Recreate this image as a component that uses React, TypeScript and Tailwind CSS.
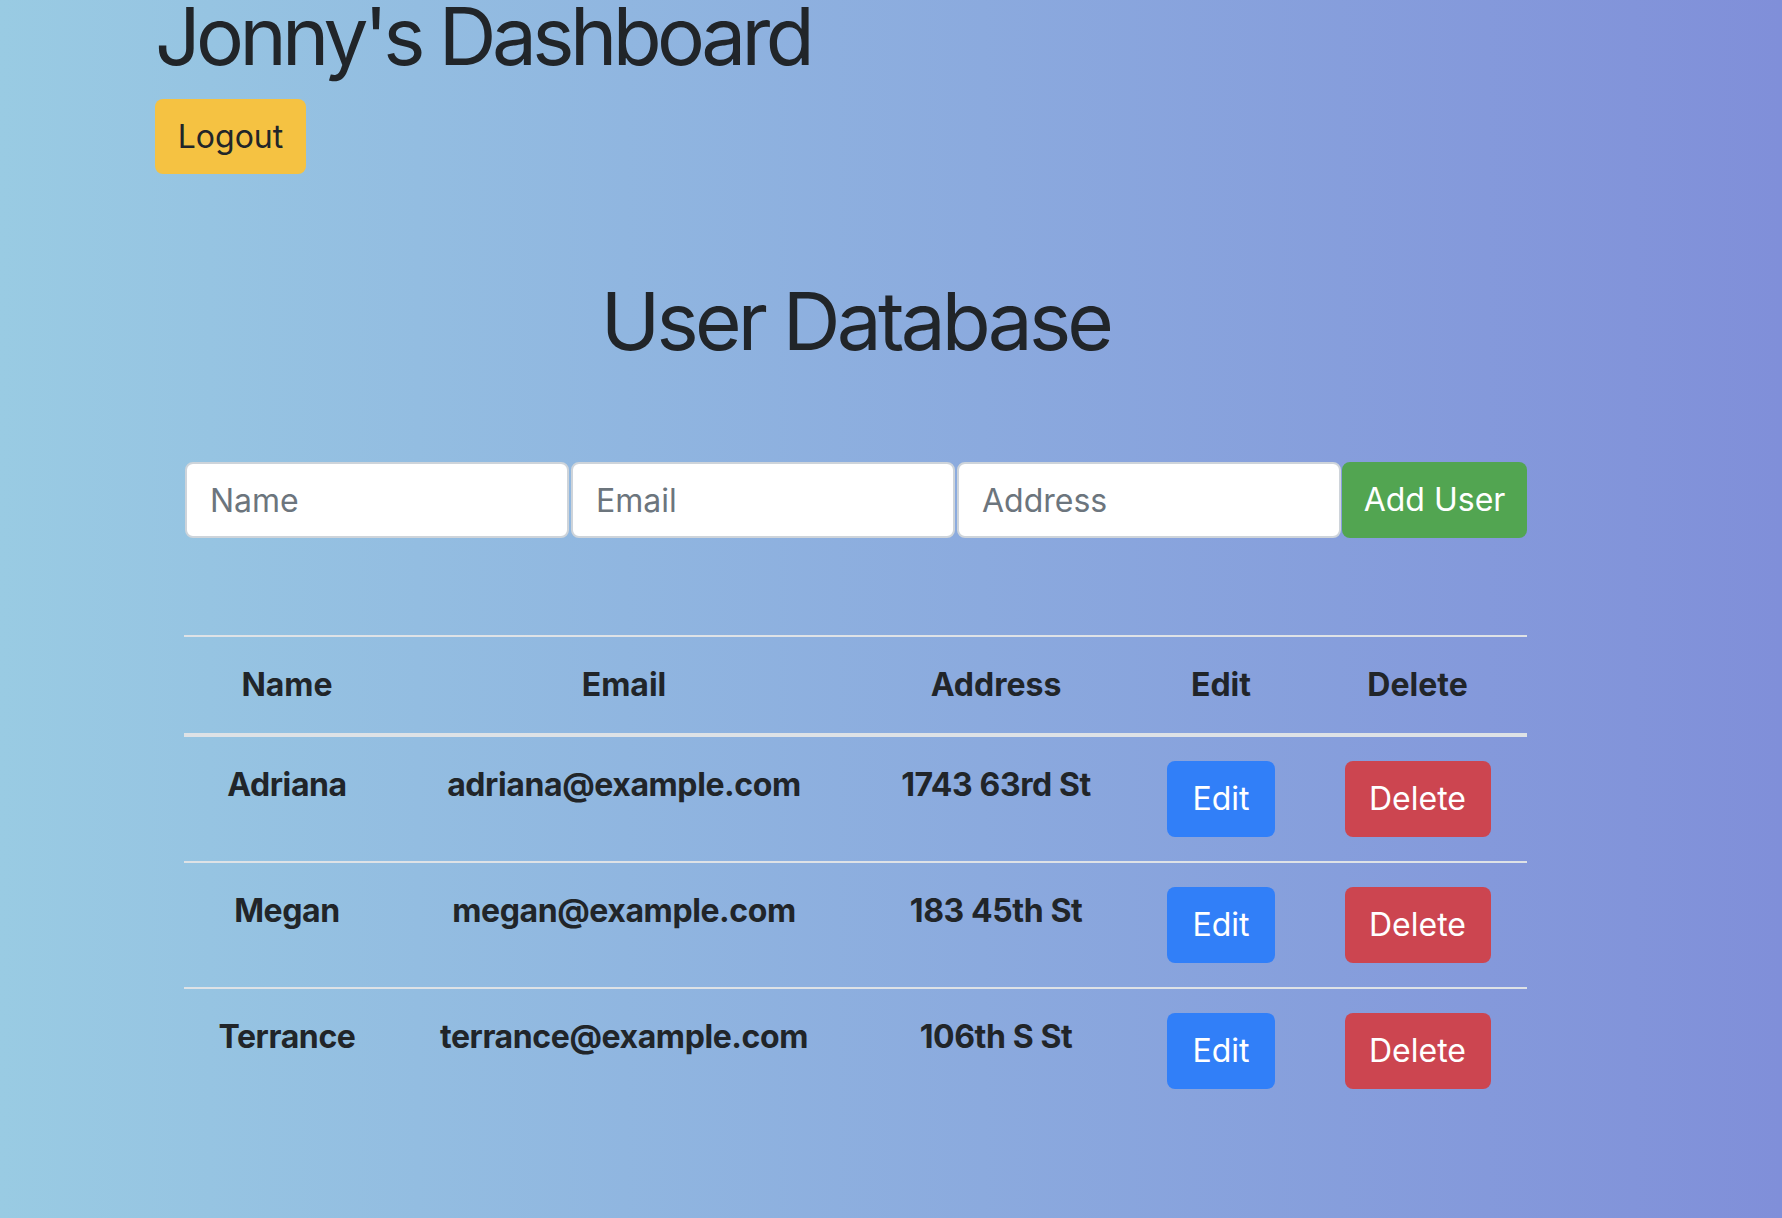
import React from "react";

const users = [
  { name: "Adriana", email: "adriana@example.com", address: "1743 63rd St" },
  { name: "Megan", email: "megan@example.com", address: "183 45th St" },
  { name: "Terrance", email: "terrance@example.com", address: "106th S St" },
];

export default function App() {
  return (
    <div
      className="min-h-[1218px] w-full bg-gradient-to-r from-[#99cbe3] to-[#808fd9] text-[#212529] overflow-hidden"
      style={{ fontFamily: "Inter, 'Noto Sans', 'Liberation Sans', sans-serif" }}
    >
      <div className="pl-[155px] pt-[1px]">
        <h1 className="mb-[28px] text-[80px] leading-[70px] font-normal tracking-[-4.6px]">
          Jonny's Dashboard
        </h1>
        <button className="h-[75px] w-[151px] rounded-[8px] bg-[#f5c242] text-[32px] leading-[48px] text-[#212529]">
          Logout
        </button>
      </div>

      <div className="ml-[184px] w-[1343px]">
        <h1 className="mt-[99px] text-center text-[80px] leading-[96px] font-normal tracking-[-3.8px]">
          User Database
        </h1>

        <form className="mt-[93px] ml-[1px] flex" onSubmit={(e) => e.preventDefault()}>
          <input
            placeholder="Name"
            className="h-[76px] w-[384px] rounded-[8px] border-2 border-[#ced4da] bg-white px-[23px] text-[32px] text-[#495057] placeholder:text-[#6c757d] outline-none"
          />
          <input
            placeholder="Email"
            className="ml-[2px] h-[76px] w-[384px] rounded-[8px] border-2 border-[#ced4da] bg-white px-[23px] text-[32px] text-[#495057] placeholder:text-[#6c757d] outline-none"
          />
          <input
            placeholder="Address"
            className="ml-[2px] h-[76px] w-[384px] rounded-[8px] border-2 border-[#ced4da] bg-white px-[23px] text-[32px] text-[#495057] placeholder:text-[#6c757d] outline-none"
          />
          <button className="ml-[1px] h-[76px] w-[185px] rounded-[8px] bg-[#52a551] text-[32px] text-white">
            Add User
          </button>
        </form>

        <table className="mt-[97px] w-[1343px] table-fixed border-collapse">
          <thead>
            <tr>
              <th className="w-[206px] border-t-2 border-b-4 border-[#dee2e6] p-[24px] text-[32px] leading-[48px] font-bold">Name</th>
              <th className="w-[468px] border-t-2 border-b-4 border-[#dee2e6] p-[24px] text-[32px] leading-[48px] font-bold">Email</th>
              <th className="w-[276px] border-t-2 border-b-4 border-[#dee2e6] p-[24px] text-[32px] leading-[48px] font-bold">Address</th>
              <th className="w-[174px] border-t-2 border-b-4 border-[#dee2e6] p-[24px] text-[32px] leading-[48px] font-bold">Edit</th>
              <th className="w-[219px] border-t-2 border-b-4 border-[#dee2e6] p-[24px] text-[32px] leading-[48px] font-bold">Delete</th>
            </tr>
          </thead>
          <tbody>
            {users.map((u, i) => (
              <tr key={u.email}>
                <td className={`${i === 0 ? "" : "border-t-2 border-[#dee2e6]"} p-[24px] align-top text-center text-[32px] leading-[48px] font-bold tracking-[-0.4px]`}>{u.name}</td>
                <td className={`${i === 0 ? "" : "border-t-2 border-[#dee2e6]"} p-[24px] align-top text-center text-[32px] leading-[48px] font-bold tracking-[-0.4px]`}>{u.email}</td>
                <td className={`${i === 0 ? "" : "border-t-2 border-[#dee2e6]"} p-[24px] align-top text-center text-[32px] leading-[48px] font-bold tracking-[-0.4px]`}>{u.address}</td>
                <td className={`${i === 0 ? "" : "border-t-2 border-[#dee2e6]"} p-[24px] align-top text-center`}>
                  <button className="h-[76px] w-[108px] rounded-[8px] bg-[#317ff8] text-[32px] text-white">Edit</button>
                </td>
                <td className={`${i === 0 ? "" : "border-t-2 border-[#dee2e6]"} p-[24px] align-top text-center`}>
                  <button className="h-[76px] w-[146px] rounded-[8px] bg-[#cc4550] text-[32px] text-white">Delete</button>
                </td>
              </tr>
            ))}
          </tbody>
        </table>
      </div>
    </div>
  );
}
